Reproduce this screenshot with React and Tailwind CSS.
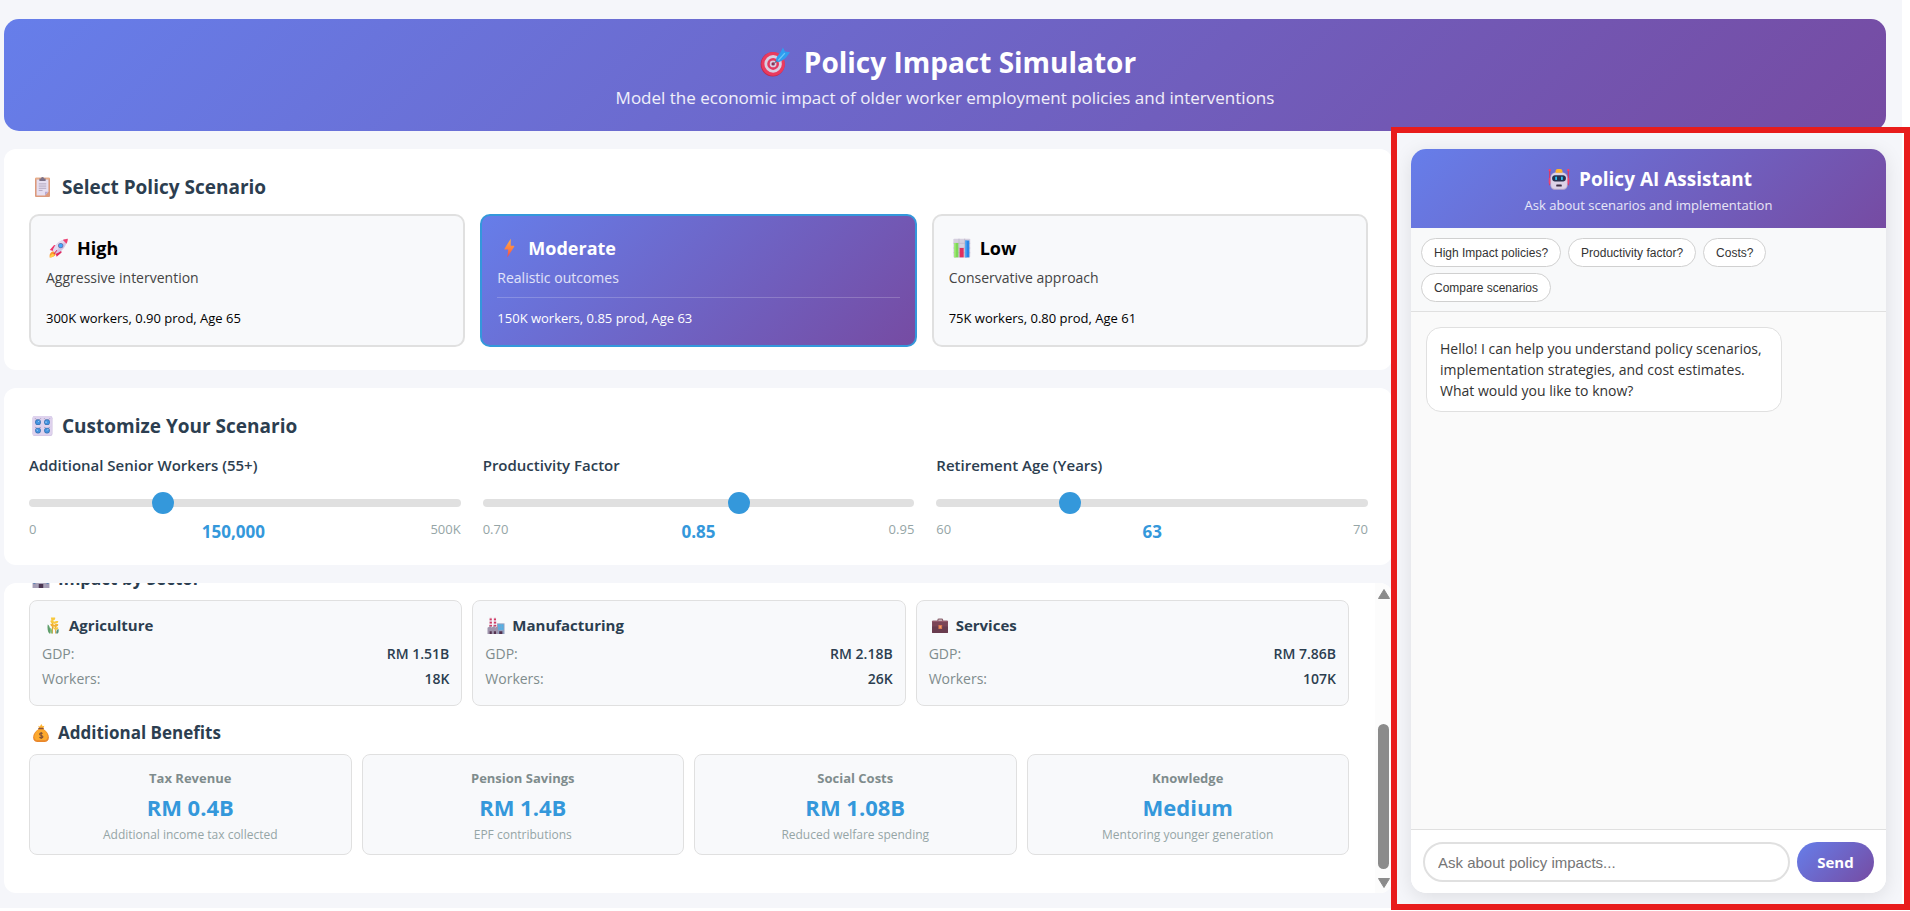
import { useLayoutEffect, useRef, useState } from "react";

const GRADIENT = "bg-[linear-gradient(135deg,#667eea_0%,#764ba2_100%)]";

function Icon({ className, children }) {
  return (
    <svg viewBox="0 0 32 32" className={"shrink-0 " + className} aria-hidden="true">
      {children}
    </svg>
  );
}

function TargetIcon({ className }) {
  return (
    <Icon className={className}>
      <ellipse cx="13.5" cy="18.5" rx="12.8" ry="13" fill="#c02a50" />
      <ellipse cx="14" cy="18" rx="12.5" ry="12.6" fill="#ea3a5f" />
      <ellipse cx="14" cy="18" rx="9.3" ry="9.4" fill="#d9cfe3" />
      <ellipse cx="14" cy="18" rx="6.3" ry="6.4" fill="#e23a60" />
      <ellipse cx="14" cy="18" rx="3.6" ry="3.6" fill="#d9cfe3" />
      <circle cx="14" cy="18" r="1.8" fill="#8d2c52" />
      <path d="M13.5 18.8 20 11l2 2z" fill="#5f6f86" />
      <path d="M17 14.5c0-2.500 2-6 4.500-8L24.500.5l2 4.300L32 5.500l-4 5.500c-3 3.500-6.500 5-9 5z" fill="#2f9df0" />
      <path d="M19 13.800 26 6l1 1-7 7.800z" fill="#6cc8fa" />
    </Icon>
  );
}

function ClipboardIcon({ className }) {
  return (
    <Icon className={className}>
      <rect x="4" y="1" width="24" height="31" rx="1.500" fill="#dc9a7c" />
      <rect x="4" y="1" width="24" height="3" rx="1.500" fill="#e8ae8a" />
      <path d="M6.500 4h19v19.500L20 29.500H6.500z" fill="#e6def0" />
      <path d="M25.500 23.500H20v6z" fill="#bba9cf" />
      <path d="M11 2.500h2.500a2.500 2.500 0 0 1 5 0H21V6.500H11z" fill="#7c7188" />
      <path d="M10 11h12M10 14.500h12M10 18h12M10 21.500h6" stroke="#a69bb4" strokeWidth="1.300" />
    </Icon>
  );
}

function RocketIcon({ className }) {
  return (
    <Icon className={className}>
      <path d="M2 31c-1-5 1-9 6-10l4 4c-1 4-5 6-10 6z" fill="#ff9a2e" />
      <path d="M2 31c1-3 2-5 5-6l2 2c-1 3-4 4-7 4z" fill="#ffd04a" />
      <path d="m2 19 7-8 7 2-7 8z" fill="#f0356a" />
      <path d="m13 30 8-7-2-7-8 7z" fill="#e02860" />
      <path d="M7 20C10 10 18 3 30 1c-1 12-8 20-18 24z" fill="#d3c6e4" />
      <path d="M7 20C10 10 18 3 30 1L10 23z" fill="#e4daef" />
      <path d="M23 3c2-1 5-1.700 8-2-.300 3-1 6-2.200 8z" fill="#f0406f" />
      <circle cx="19.500" cy="12" r="4.200" fill="#6b6fa8" />
      <circle cx="19.500" cy="12" r="3" fill="#3fa9ff" />
      <path d="m8 25 5-6 1 1-5 6z" fill="#d91f57" />
    </Icon>
  );
}

function BoltIcon({ className }) {
  return (
    <Icon className={className}>
      <defs>
        <linearGradient id="bolt" x1="0" y1="0" x2="0" y2="1">
          <stop offset="0" stopColor="#ffae45" />
          <stop offset="0.550" stopColor="#ff8040" />
          <stop offset="1" stopColor="#f0434f" />
        </linearGradient>
      </defs>
      <path d="M18 1 8 17c-.5.800 0 1.500.800 1.500H14L12.500 31 23.500 14c.5-.8 0-1.500-.8-1.500H18z" fill="url(#bolt)" />
    </Icon>
  );
}

function ChartIcon({ className }) {
  return (
    <Icon className={className}>
      <rect x="3" y="1" width="27" height="30" rx="1.500" fill="#d6d0df" />
      <path d="M3 8.500h27M3 16h27M3 23.500h27M12 1v30M21 1v30" stroke="#b9b0c7" />
      <rect x="4.500" y="8" width="6.500" height="23" fill="#7ed957" />
      <rect x="4.500" y="8" width="2" height="23" fill="#a8ef7c" />
      <rect x="13" y="16" width="6.500" height="15" fill="#e0305f" />
      <rect x="22" y="4" width="6.500" height="27" fill="#2a86e8" />
      <rect x="22" y="4" width="2" height="27" fill="#57adf8" />
    </Icon>
  );
}

function KnobsIcon({ className }) {
  return (
    <Icon className={className}>
      <rect x="0" y="0" width="32" height="32" rx="3.500" fill="#cdbfe0" />
      <rect x="0" y="0" width="31" height="31" rx="3.500" fill="#dfd3ee" />
      <path d="M4.500 4l1.500 1.500M13 4l-1.500 1.500M19 4l1.500 1.500M27.500 4 26 5.500M4.500 17.500 6 19M13 17.500 11.500 19M19 17.500l1.500 1.500M27.500 17.500 26 19" stroke="#8d7ba8" strokeWidth="1.600" />
      <circle cx="8.800" cy="9.800" r="4.600" fill="#376fae" />
      <circle cx="23.200" cy="9.800" r="4.600" fill="#376fae" />
      <circle cx="8.800" cy="23.300" r="4.600" fill="#376fae" />
      <circle cx="23.200" cy="23.300" r="4.600" fill="#376fae" />
      <circle cx="8.800" cy="9.800" r="3.600" fill="#4393e0" />
      <circle cx="23.200" cy="9.800" r="3.600" fill="#4393e0" />
      <circle cx="8.800" cy="23.300" r="3.600" fill="#4393e0" />
      <circle cx="23.200" cy="23.300" r="3.600" fill="#4393e0" />
      <path d="M8.800 9.800 11 7.500M23.200 9.800h-3M8.800 23.300 6.500 22M23.200 23.300l2-2.300" stroke="#c6e2fb" strokeWidth="1.200" />
    </Icon>
  );
}

function BuildingIcon({ className }) {
  return (
    <Icon className={className}>
      <rect x="7" y="0" width="18" height="32" fill="#a9a3b8" />
      <rect x="1" y="11" width="7" height="21" fill="#a59db6" />
      <rect x="24" y="11" width="7" height="21" fill="#a59db6" />
      <rect x="9" y="3" width="14" height="19" fill="#58b8ea" />
      <path d="M13.500 3v19M18.500 3v19M9 9h14M9 15h14" stroke="#8a86a0" />
      <rect x="2.500" y="14" width="3.500" height="4" fill="#5f86b4" />
      <rect x="2.500" y="21" width="3.500" height="4" fill="#5f86b4" />
      <rect x="26" y="14" width="3.500" height="4" fill="#5f86b4" />
      <rect x="26" y="21" width="3.500" height="4" fill="#5f86b4" />
      <path d="M12 32v-7h8v7z" fill="#4b3551" />
    </Icon>
  );
}

function WheatIcon({ className }) {
  return (
    <Icon className={className}>
      <path d="M15 31V8M21 31V14" stroke="#d9a441" strokeWidth="2" />
      <path d="M12 1h8c1 3-1 5-3 5.500h-4zM11 7c3-1 6 0 7 2 3-2 6-2 8-1 0 3-3 5-8 4.500-4 0-7-2-7-5.500z" fill="#f8c93f" />
      <path d="M11 13c3-1 6 0 7 2 3-2 6-2 8-1 0 3-3 5-8 4.500-4 0-7-2-7-5.500z" fill="#f2b233" />
      <path d="M16 19c2 0 3 1 4 2 2-2 4-2 6-1 0 2-2 4-5 4s-5-2-5-5z" fill="#f8c93f" />
      <path d="M6 14c4 2 5 9 5 17H9c-3-3-4-10-3-17z" fill="#5f9e6b" />
      <path d="M11 20c3 1 4 6 4 11h-3c-2-3-2-7-1-11z" fill="#87bf78" />
      <path d="M26 22c-3 2-4 5-4 9h3c2-2 2-6 1-9z" fill="#4c8f7c" />
    </Icon>
  );
}

function FactoryIcon({ className }) {
  return (
    <Icon className={className}>
      <path d="M4 1h4l1 21H3zM12 1h4l1 21h-6z" fill="#e9d7e4" />
      <path d="M4 3h4v3H4zM4 9h4.300v3H4zM3.500 15h5v3h-5zM12 3h4v3h-4zM12 9h4.300v3H12zM11.500 15h5v3h-5z" fill="#d23a63" />
      <rect x="18" y="12" width="14" height="20" fill="#8fa0c0" />
      <rect x="20" y="14" width="10" height="10" fill="#45b5ef" />
      <path d="M23.300 14v10M26.700 14v10M20 19h10" stroke="#8fa0c0" />
      <path d="M0 32V20l7-4v4l7-4v4l6-3v15z" fill="#9f94ac" />
      <path d="M4 32v-5h4v5zM12 32v-5h4v5zM22 32v-5h6v5z" fill="#54324f" />
    </Icon>
  );
}

function BriefcaseIcon({ className }) {
  return (
    <Icon className={className}>
      <path d="M12 8V5.500C12 4.500 13 4 14 4h5c1 0 2 .5 2 1.500V8" fill="none" stroke="#8c6470" strokeWidth="2" />
      <rect x="1" y="7" width="30" height="23" rx="1.500" fill="#7b4556" />
      <path d="M1 18h30v10.500A1.500 1.500 0 0 1 29.500 30h-27A1.500 1.500 0 0 1 1 28.500z" fill="#693c4e" />
      <rect x="1" y="7" width="30" height="2.500" rx="1.200" fill="#93596a" />
      <rect x="13" y="15" width="7" height="7.500" rx="1" fill="#d9774f" />
      <rect x="15" y="17" width="3" height="3.500" fill="#f4a46d" />
    </Icon>
  );
}

function MoneyBagIcon({ className }) {
  return (
    <Icon className={className}>
      <path d="m11 3 3 1.500L16.500 0 19 4l3-1-2 5h-7z" fill="#ffb331" />
      <path d="M12 9C6 13 2 18 2 24c0 5 3 8 8 8h12c5 0 8-3 8-8 0-6-4-11-10-15z" fill="#e9872c" />
      <path d="M12 9C7 13 4 18 4 23c0 4 3 6 6 6h11c5 0 7-3 7-7 0-5-3-9-8-13z" fill="#fca92e" />
      <rect x="11" y="6.500" width="10" height="3" rx="1.500" fill="#8a5039" />
      <path d="M19 17c-1-1.300-5.500-1.500-5.500 1 0 2.800 6 1.700 6 4.700 0 2.600-5 2.500-6.200.600M16.300 14v12.500" fill="none" stroke="#7a4d37" strokeWidth="1.800" />
    </Icon>
  );
}

function RobotIcon({ className }) {
  return (
    <Icon className={className}>
      <path d="M2.500 3v22M29.500 3v22" stroke="#e52e5c" strokeWidth="1.600" />
      <circle cx="2.500" cy="3" r="1.700" fill="#ff3d63" />
      <circle cx="29.500" cy="3" r="1.700" fill="#ff3d63" />
      <rect x="1" y="14" width="4" height="9" rx="1.500" fill="#f0426e" />
      <rect x="27" y="14" width="4" height="9" rx="1.500" fill="#f0426e" />
      <path d="M3.500 14c0-5 4-8 9-8h7c5 0 9 3 9 8v11c0 4-3 6.500-6 6.500h-13c-3 0-6-2.500-6-6.500z" fill="#bfaecd" />
      <path d="M4.500 14c0-4 4-7 8-7h7c4 0 8 3 8 7v10c0 4-2 6-5 6h-13c-3 0-5-2-5-6z" fill="#ddd2e8" />
      <path d="M11 4.500c0-2 1.500-3 3-3h4c1.500 0 3 1 3 3V7H11z" fill="#ffb52e" />
      <path d="M6 14c0-2 2-3.500 4-3.500h12c2 0 4 1.500 4 3.500v1.500c0 2.500-2 4-4 4H10c-2 0-4-1.500-4-4z" fill="#26304f" />
      <rect x="10.500" y="12.500" width="2.600" height="5" rx="1.300" fill="#2dc3f5" />
      <rect x="18.900" y="12.500" width="2.600" height="5" rx="1.300" fill="#2dc3f5" />
      <rect x="12" y="24" width="8" height="3" rx="0.800" fill="#3a2a44" />
    </Icon>
  );
}

const SCENARIOS = [
  { id: "high", Icon: RocketIcon, title: "High", text: "Aggressive intervention", detail: "300K workers, 0.90 prod, Age 65" },
  { id: "moderate", Icon: BoltIcon, title: "Moderate", text: "Realistic outcomes", detail: "150K workers, 0.85 prod, Age 63" },
  { id: "low", Icon: ChartIcon, title: "Low", text: "Conservative approach", detail: "75K workers, 0.80 prod, Age 61" },
];

const SLIDERS = [
  { id: "workers", label: "Additional Senior Workers (55+)", min: 0, max: 500000, step: 10000, start: 150000, low: "0", high: "500K", format: (v) => v.toLocaleString("en-US") },
  { id: "productivity", label: "Productivity Factor", min: 0.7, max: 0.95, step: 0.01, start: 0.85, low: "0.70", high: "0.95", format: (v) => v.toFixed(2) },
  { id: "retirement", label: "Retirement Age (Years)", min: 60, max: 70, step: 1, start: 63, low: "60", high: "70", format: (v) => String(v) },
];

const SECTORS = [
  { Icon: WheatIcon, name: "Agriculture", gdp: "RM 1.51B", workers: "18K" },
  { Icon: FactoryIcon, name: "Manufacturing", gdp: "RM 2.18B", workers: "26K" },
  { Icon: BriefcaseIcon, name: "Services", gdp: "RM 7.86B", workers: "107K" },
];

const BENEFITS = [
  { name: "Tax Revenue", value: "RM 0.4B", note: "Additional income tax collected" },
  { name: "Pension Savings", value: "RM 1.4B", note: "EPF contributions" },
  { name: "Social Costs", value: "RM 1.08B", note: "Reduced welfare spending" },
  { name: "Knowledge", value: "Medium", note: "Mentoring younger generation" },
];

const QUESTIONS = ["High Impact policies?", "Productivity factor?", "Costs?", "Compare scenarios"];

function PanelHeading({ icon: HeadingIcon, children }) {
  return (
    <h2 className="flex items-center gap-1.5 text-[19px] leading-[26px] font-bold text-[#2c3e50]">
      <HeadingIcon className="h-5 w-[27px]" />
      {children}
    </h2>
  );
}

function ResultHeading({ icon: HeadingIcon, children }) {
  return (
    <h3 className="mb-[9px] flex items-center gap-[5px] text-[17px] leading-6 font-bold text-[#2c3e50]">
      <HeadingIcon className="h-[18px] w-6" />
      {children}
    </h3>
  );
}

function ScenarioCard({ scenario, active, onSelect }) {
  const CardIcon = scenario.Icon;
  return (
    <button
      type="button"
      aria-pressed={active}
      onClick={onSelect}
      className={
        "flex flex-col rounded-[10px] border-2 px-[15px] pt-5 pb-[18px] text-left " +
        (active
          ? "border-[#3498db] bg-[linear-gradient(135deg,#667eea_0%,#764ba2_100%)] bg-origin-border text-white"
          : "border-[#e0e0e0] bg-[#f8f9fb] text-black")
      }
    >
      <span className="flex items-center gap-1.5 text-[18px] leading-6 font-bold">
        <CardIcon className="h-5 w-[25px]" />
        {scenario.title}
      </span>
      <span className={"mt-2 text-sm leading-5 " + (active ? "text-white/80" : "text-[#444444]")}>
        {scenario.text}
      </span>
      <span className={"mt-[9px] border-t pt-[11px] text-[13px] leading-[18px] " + (active ? "border-white/20" : "border-transparent")}>
        {scenario.detail}
      </span>
    </button>
  );
}

function SliderControl({ slider }) {
  const [value, setValue] = useState(slider.start);
  return (
    <div className="flex min-w-0 flex-col">
      <label htmlFor={slider.id} className="text-[15px] leading-5 font-semibold text-[#2c3e50]">
        {slider.label}
      </label>
      <div className="mt-[17px] flex h-[22px] items-center">
        <input
          id={slider.id}
          type="range"
          min={slider.min}
          max={slider.max}
          step={slider.step}
          value={value}
          onChange={(e) => setValue(Number(e.target.value))}
          className="h-2 w-full cursor-pointer appearance-none rounded bg-[#e0e0e0] [&::-webkit-slider-thumb]:size-[22px] [&::-webkit-slider-thumb]:appearance-none [&::-webkit-slider-thumb]:rounded-full [&::-webkit-slider-thumb]:bg-[#3498db]"
        />
      </div>
      <div className="mt-[5px] flex justify-between text-[13px] leading-5 text-[#95a5a6]">
        <span>{slider.low}</span>
        <output htmlFor={slider.id} className="text-[17px] leading-[26px] font-bold text-[#3498db]">
          {slider.format(value)}
        </output>
        <span>{slider.high}</span>
      </div>
    </div>
  );
}

function Results() {
  const scroller = useRef(null);
  useLayoutEffect(() => {
    scroller.current.scrollTop = scroller.current.scrollHeight;
  }, []);
  return (
    <section className="flex min-h-0 flex-1 overflow-hidden rounded-xl bg-white">
      <div ref={scroller} className="min-w-0 flex-1 overflow-y-auto pt-6 pr-[26px] pb-[38px] pl-[25px] [scrollbar-width:none]">
        <ResultHeading icon={BuildingIcon}>Impact by Sector</ResultHeading>
        <div className="mb-[15px] grid grid-cols-3 gap-2.5">
          {SECTORS.map(({ Icon: SectorIcon, name, gdp, workers }) => (
            <div key={name} className="rounded-lg border border-[#e0e0e0] bg-[#f8f9fb] px-3 pt-[13px] pb-4">
              <h4 className="flex items-center gap-[5px] text-[15px] leading-[22px] font-bold text-[#2c3e50]">
                <SectorIcon className="h-[17px] w-[22px]" />
                {name}
              </h4>
              <dl className="mt-2 flex flex-col gap-[5px] text-sm leading-5">
                <div className="flex justify-between">
                  <dt className="text-[#7f8c8d]">GDP:</dt>
                  <dd className="font-semibold text-[#2c3e50]">{gdp}</dd>
                </div>
                <div className="flex justify-between">
                  <dt className="text-[#7f8c8d]">Workers:</dt>
                  <dd className="font-semibold text-[#2c3e50]">{workers}</dd>
                </div>
              </dl>
            </div>
          ))}
        </div>
        <ResultHeading icon={MoneyBagIcon}>Additional Benefits</ResultHeading>
        <div className="grid grid-cols-4 gap-2.5">
          {BENEFITS.map(({ name, value, note }) => (
            <div key={name} className="rounded-lg border border-[#e0e0e0] bg-[#f8f9fb] px-3 pt-3.5 pb-2.5 text-center">
              <h4 className="text-[13px] leading-[18px] font-bold text-[#7f8c8d]">{name}</h4>
              <p className="mt-1.5 text-[22px] leading-7 font-bold text-[#3498db]">{value}</p>
              <p className="mt-[5px] text-xs leading-[18px] text-[#95a5a6]">{note}</p>
            </div>
          ))}
        </div>
      </div>
      <div className="flex w-[17px] shrink-0 flex-col items-center bg-[#fcfcfc] pt-[5px] pb-1" aria-hidden="true">
        <svg viewBox="0 0 14 12" className="h-3 w-3.5">
          <path d="M7 1.500 12.500 10.500h-11z" fill="#8b8b8b" stroke="#8b8b8b" strokeLinejoin="round" />
        </svg>
        <div className="mt-[124px] mb-2 w-[11px] flex-1 rounded-full bg-[#8b8b8b]" />
        <svg viewBox="0 0 14 12" className="h-3 w-3.5">
          <path d="M7 10.500 1.500 1.500h11z" fill="#8b8b8b" stroke="#8b8b8b" strokeLinejoin="round" />
        </svg>
      </div>
    </section>
  );
}

function Assistant() {
  return (
    <aside className="relative flex w-[475px] shrink-0 flex-col">
      <div className="flex min-h-0 flex-1 flex-col overflow-hidden rounded-[15px] bg-white shadow-[0_4px_20px_rgba(0,0,0,0.1)]">
        <header className={"px-5 pt-[18px] pb-3.5 text-center text-white " + GRADIENT}>
          <h2 className="flex items-center justify-center gap-1.5 text-[19px] leading-6 font-bold">
            <RobotIcon className="h-[22px] w-7" />
            Policy AI Assistant
          </h2>
          <p className="mt-[5px] text-[13px] leading-[18px] text-white/85">Ask about scenarios and implementation</p>
        </header>
        <div className="flex flex-wrap gap-x-[7px] gap-y-1.5 border-b border-[#e0e0e0] bg-[#f8f9fa] px-2.5 pt-2.5 pb-[9px]">
          {QUESTIONS.map((question) => (
            <button
              key={question}
              type="button"
              className="h-[29px] rounded-full border border-[#d0d0d0] bg-white px-3 font-['Liberation_Sans',Arial,sans-serif] text-xs text-[#333333]"
            >
              {question}
            </button>
          ))}
        </div>
        <div className="min-h-0 flex-1 overflow-y-auto bg-[#fafafa] p-[15px]">
          <p className="w-4/5 rounded-[15px] border border-[#e0e0e0] bg-white px-[13px] py-2.5 text-sm leading-[21px] text-[#333333]">
            Hello! I can help you understand policy scenarios, implementation strategies, and cost estimates. What would you like to know?
          </p>
        </div>
        <form
          onSubmit={(e) => e.preventDefault()}
          className="flex gap-[7px] border-t border-[#e0e0e0] bg-white px-3 pt-3 pb-[11px]"
        >
          <input
            type="text"
            aria-label="Ask about policy impacts"
            placeholder="Ask about policy impacts..."
            className="h-10 min-w-0 flex-1 rounded-full border-2 border-[#e0e0e0] bg-white px-[13px] font-['Liberation_Sans',Arial,sans-serif] text-[15px] text-[#333333] outline-none placeholder:text-[#757575]"
          />
          <button type="submit" className={"h-10 w-[77px] rounded-full text-[15px] font-bold text-white " + GRADIENT}>
            Send
          </button>
        </form>
      </div>
      <div className="pointer-events-none absolute -top-[22px] -right-6 -bottom-[17px] -left-5 border-[6px] border-[#e81c1c]" />
    </aside>
  );
}

export default function App() {
  const [selected, setSelected] = useState("moderate");
  return (
    <div className="h-screen bg-white pr-2 pb-[3px] font-['Segoe_UI','Open_Sans','Noto_Sans',sans-serif]">
      <div className="flex h-full flex-col gap-[18px] bg-[#f5f6fa] pt-[19px] pr-4 pb-[15px] pl-1">
        <header className={"rounded-[15px] px-6 pt-[23px] pb-[21px] text-center text-white " + GRADIENT}>
          <h1 className="flex items-center justify-center gap-2 text-[28px] leading-10 font-bold">
            <TargetIcon className="h-[30px] w-[42px]" />
            Policy Impact Simulator
          </h1>
          <p className="mt-1 text-[17px] leading-6 text-white/90">
            Model the economic impact of older worker employment policies and interventions
          </p>
        </header>
        <div className="flex min-h-0 flex-1 gap-[19px]">
          <main className="flex min-w-0 flex-1 flex-col gap-[18px]">
            <section className="rounded-xl bg-white pt-[25px] pr-6 pb-[23px] pl-[25px]">
              <PanelHeading icon={ClipboardIcon}>Select Policy Scenario</PanelHeading>
              <div className="mt-3.5 grid grid-cols-3 gap-[15px]">
                {SCENARIOS.map((scenario) => (
                  <ScenarioCard
                    key={scenario.id}
                    scenario={scenario}
                    active={scenario.id === selected}
                    onSelect={() => setSelected(scenario.id)}
                  />
                ))}
              </div>
            </section>
            <section className="rounded-xl bg-white pt-[25px] pr-6 pb-5 pl-[25px]">
              <PanelHeading icon={KnobsIcon}>Customize Your Scenario</PanelHeading>
              <div className="mt-4 grid grid-cols-3 gap-[22px]">
                {SLIDERS.map((slider) => (
                  <SliderControl key={slider.id} slider={slider} />
                ))}
              </div>
            </section>
            <Results />
          </main>
          <Assistant />
        </div>
      </div>
    </div>
  );
}
